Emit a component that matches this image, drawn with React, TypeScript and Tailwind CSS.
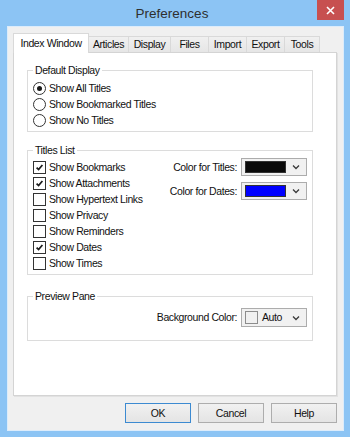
import React from "react";

const Chevron = () => (
  <svg width="8" height="6" viewBox="0 0 8 6" className="shrink-0">
    <path d="M1 1.5 L4 4.5 L7 1.5" fill="none" stroke="#3a3a3a" strokeWidth="1.3" />
  </svg>
);

const Radio = ({ checked, label }: { checked?: boolean; label: string }) => (
  <div className="flex h-[16px] items-center gap-[3px]">
    <span className="flex h-[13px] w-[13px] items-center justify-center rounded-full border border-[#333] bg-white">
      {checked && <span className="h-[5px] w-[5px] rounded-full bg-[#1a1a1a]" />}
    </span>
    <span>{label}</span>
  </div>
);

const Check = ({ checked, label }: { checked?: boolean; label: string }) => (
  <div className="flex h-[16px] items-center gap-[3px]">
    <span className="flex h-[13px] w-[13px] items-center justify-center border border-[#333] bg-white">
      {checked && (
        <svg width="11" height="11" viewBox="0 0 11 11">
          <path d="M2.6 5.6 L4.6 7.6 L8.4 3" fill="none" stroke="#1a1a1a" strokeWidth="1.7" />
        </svg>
      )}
    </span>
    <span>{label}</span>
  </div>
);

const Tab = ({ label, w, selected, first }: { label: string; w: string; selected?: boolean; first?: boolean }) =>
  selected ? (
    <div
      className={`relative z-10 -mb-px flex h-[20px] items-start justify-center border border-b-0 border-[#d9d9d9] bg-white pt-[3px] ${w}`}
    >
      {label}
    </div>
  ) : (
    <div
      className={`flex h-[16px] items-center justify-center border-r border-t border-[#d9d9d9] bg-linear-to-b from-[#f0f0f0] to-[#e6e6e6] ${first ? "border-l" : ""} ${w}`}
    >
      {label}
    </div>
  );

const Btn = ({ label, def }: { label: string; def?: boolean }) => (
  <div
    className={`flex h-[20px] w-[66px] items-center justify-center border bg-linear-to-b from-[#f1f1f1] to-[#e4e4e4] ${
      def ? "border-[#3c8ad1]" : "border-[#adadad]"
    }`}
  >
    {label}
  </div>
);

export default function App() {
  return (
    <div className="flex h-[437px] w-[350px] flex-col bg-[#8cc4f4] pb-[6px] pl-[7px] pr-[6px] font-['Liberation_Sans',Arial,sans-serif] text-[10.5px] leading-[13px] tracking-[-0.4px] text-[#111]">
      {/* title bar */}
      <div className="relative flex h-[26px] shrink-0 items-center justify-center">
        <span className="-ml-[7px] text-[13.5px] tracking-normal text-[#2f2f2f]">Preferences</span>
        <div className="absolute right-[0px] top-0 flex h-[20px] w-[27px] items-center justify-center bg-[#c75050]">
          <svg width="9" height="9" viewBox="0 0 9 9">
            <path d="M1 1 L8 8 M8 1 L1 8" stroke="#fff" strokeWidth="1.6" />
          </svg>
        </div>
      </div>

      {/* client */}
      <div className="flex flex-1 flex-col border border-[#dcecfb] bg-[#f0f0f0] pl-[5px] pr-[6px]">
        {/* tabs */}
        <div className="flex h-[25px] shrink-0 items-end">
          <Tab label="Index Window" w="w-[76px]" selected />
          <Tab label="Articles" w="w-[40px]" />
          <Tab label="Display" w="w-[42px]" />
          <Tab label="Files" w="w-[38px]" />
          <Tab label="Import" w="w-[38px]" />
          <Tab label="Export" w="w-[38px]" />
          <Tab label="Tools" w="w-[35px]" />
        </div>

        {/* panel */}
        <div className="flex h-[344px] shrink-0 flex-col border border-[#d4d4d4] bg-white pl-[13px] pr-[23px] pt-[11px] shadow-[1px_1px_0_#e2e2e2]">
          <fieldset className="border border-[#dcdcdc] pb-[3px] pl-[5px]">
            <legend className="px-[2px] leading-[13px]">Default Display</legend>
            <div className="flex flex-col pt-[3px]">
              <Radio checked label="Show All Titles" />
              <Radio label="Show Bookmarked Titles" />
              <Radio label="Show No Titles" />
            </div>
          </fieldset>

          <fieldset className="mt-[12px] border border-[#dcdcdc] pb-[3px] pl-[5px] pr-[5px]">
            <legend className="px-[2px] leading-[13px]">Titles List</legend>
            <div className="flex justify-between pt-[2px]">
              <div className="flex flex-col">
                <Check checked label="Show Bookmarks" />
                <Check checked label="Show Attachments" />
                <Check label="Show Hypertext Links" />
                <Check label="Show Privacy" />
                <Check label="Show Reminders" />
                <Check checked label="Show Dates" />
                <Check label="Show Times" />
              </div>
              <div className="-mt-px flex flex-col gap-[6px]">
                <div className="flex items-center justify-end gap-[4px]">
                  <span>Color for Titles:</span>
                  <div className="flex h-[18px] w-[66px] items-center border border-[#acacac] bg-[#f1f1f1] pl-[3px] pr-[6px]">
                    <span className="h-[12px] w-[41px] border border-[#333] bg-[#0a0a0a]" />
                    <span className="ml-auto">
                      <Chevron />
                    </span>
                  </div>
                </div>
                <div className="flex items-center justify-end gap-[4px]">
                  <span>Color for Dates:</span>
                  <div className="flex h-[18px] w-[66px] items-center border border-[#acacac] bg-[#f1f1f1] pl-[3px] pr-[6px]">
                    <span className="h-[12px] w-[41px] border border-[#333] bg-[#0000ff]" />
                    <span className="ml-auto">
                      <Chevron />
                    </span>
                  </div>
                </div>
              </div>
            </div>
          </fieldset>

          <fieldset className="mt-[15px] border border-[#dcdcdc] pb-[13px] pl-[5px] pr-[5px]">
            <legend className="px-[2px] leading-[13px]">Preview Pane</legend>
            <div className="flex items-center justify-end gap-[4px] pt-[5px]">
              <span>Background Color:</span>
              <div className="flex h-[19px] w-[66px] items-center border border-[#acacac] bg-[#f1f1f1] pl-[3px] pr-[6px]">
                <span className="h-[13px] w-[13px] border border-[#8c8c8c] bg-[#f0f0f0]" />
                <span className="ml-[4px]">Auto</span>
                <span className="ml-auto">
                  <Chevron />
                </span>
              </div>
            </div>
          </fieldset>
        </div>

        {/* buttons */}
        <div className="mt-[7px] flex justify-end gap-[7px]">
          <Btn label="OK" def />
          <Btn label="Cancel" />
          <Btn label="Help" />
        </div>
      </div>
    </div>
  );
}
